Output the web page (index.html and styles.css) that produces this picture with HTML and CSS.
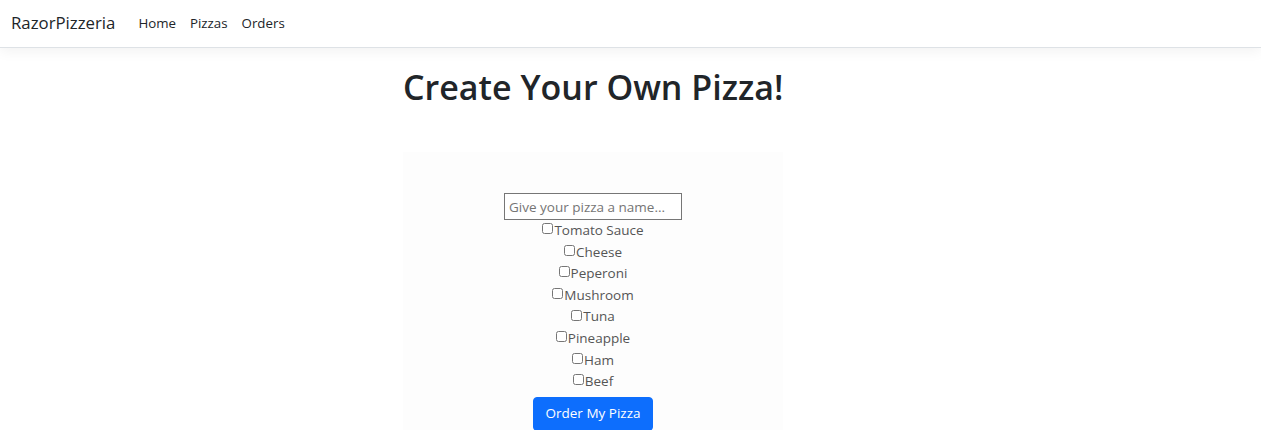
FILE: index.html
```html
<!DOCTYPE html>
<html>
<head>
<meta charset="utf-8">
<link rel="stylesheet" href="styles.css">
</head>
<body>
<header class="navbar">
  <a class="brand" href="#">RazorPizzeria</a>
  <nav class="links">
    <a href="#">Home</a>
    <a href="#">Pizzas</a>
    <a href="#">Orders</a>
  </nav>
</header>
<main class="main">
  <div class="column">
    <h1 class="title">Create Your Own Pizza!</h1>
    <form class="panel">
      <input class="name" type="text" placeholder="Give your pizza a name...">
      <label class="opt"><input type="checkbox">Tomato Sauce</label>
      <label class="opt"><input type="checkbox">Cheese</label>
      <label class="opt"><input type="checkbox">Peperoni</label>
      <label class="opt"><input type="checkbox">Mushroom</label>
      <label class="opt"><input type="checkbox">Tuna</label>
      <label class="opt"><input type="checkbox">Pineapple</label>
      <label class="opt"><input type="checkbox">Ham</label>
      <label class="opt"><input type="checkbox">Beef</label>
      <button class="order" type="button">Order My Pizza</button>
    </form>
  </div>
</main>
</body>
</html>
```
FILE: styles.css
```css
html, body {
  margin: 0;
  padding: 0;
  background: #fff;
}
body {
  font-family: "Open Sans", "Liberation Sans", sans-serif;
  color: #212529;
  font-size: 16px;
}
.navbar {
  height: 47px;
  display: flex;
  align-items: center;
  padding: 0 11px;
  border-bottom: 1px solid #dee2e6;
  box-shadow: 0 4px 12px rgba(0,0,0,0.05);
}
.brand {
  font-size: 16.8px;
  color: #212529;
  text-decoration: none;
  margin-right: 23px;
  position: relative;
  top: -1px;
}
.links {
  display: flex;
  gap: 14px;
}
.links a {
  font-size: 13.3px;
  color: #212529;
  text-decoration: none;
  position: relative;
  top: -1px;
}
.main {
  padding-top: 15px;
}
.column {
  width: 380px;
  margin-left: 403px;
}
.title {
  margin: 0 0 41px;
  font-size: 34px;
  font-weight: 600;
  line-height: 48px;
  text-align: center;
  white-space: nowrap;
}
.panel {
  background: #fdfdfd;
  padding-top: 41px;
  height: 237px;
  display: flex;
  flex-direction: column;
  align-items: center;
  font-size: 13.5px;
  line-height: 21.6px;
  color: #555;
}
.name {
  box-sizing: border-box;
  width: 178px;
  height: 27px;
  flex: 0 0 27px;
  border: 1px solid #767676;
  border-radius: 0;
  padding: 0 4px;
  font-family: inherit;
  font-size: 13.5px;
  color: #555;
  margin: 0;
}
.name::placeholder {
  color: #757575;
}
.opt {
  display: flex;
  align-items: center;
  flex: 0 0 21.6px;
}
.opt input {
  margin: 0 1px 0 0;
  width: 11px;
  height: 11px;
  position: relative;
  top: -2px;
}
.order {
  margin-top: 4px;
  background: #0d6efd;
  border: 1px solid #0d6efd;
  color: #fff;
  font-family: inherit;
  font-size: 13.5px;
  line-height: 21.6px;
  padding: 5px 12px 6px;
  border-radius: 4px;
}
```
